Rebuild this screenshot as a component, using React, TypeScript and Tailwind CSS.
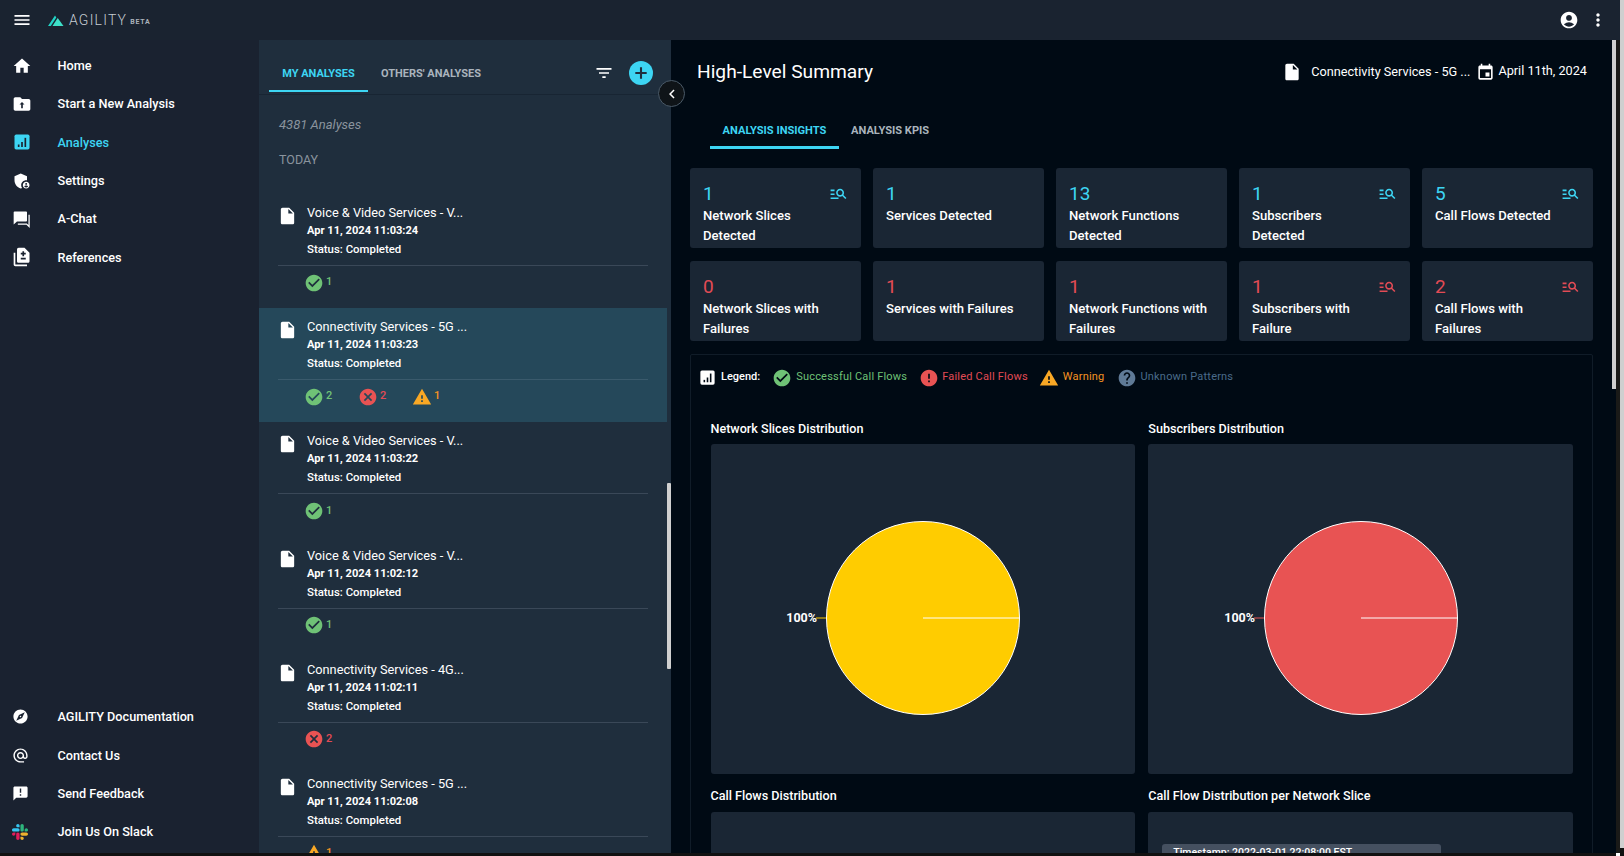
import React from 'react';
import {
  MdAccountCircle,
  MdAdminPanelSettings,
  MdAlternateEmail,
  MdAnnouncement,
  MdCancel,
  MdCheckCircle,
  MdChevronLeft,
  MdDifference,
  MdError,
  MdEvent,
  MdExplore,
  MdFilterList,
  MdHelp,
  MdHome,
  MdInsertDriveFile,
  MdManageSearch,
  MdMenu,
  MdMoreVert,
  MdWarning,
} from 'react-icons/md';

// small custom icons, the icon sets have no exact match for these
const FolderUp = ({ size = 20 }: { size?: number }) => (
  <svg viewBox="0 0 24 24" width={size} height={size}>
    <path d="M20 6h-8l-2-2H4c-1.1 0-2 .9-2 2v12c0 1.1.9 2 2 2h16c1.1 0 2-.9 2-2V8c0-1.1-.9-2-2-2z" fill="#fff" />
    <path d="M12 9.5l-3 3.2h2V17h2v-4.3h2z" fill="#1a2230" />
  </svg>
);

const BarsSquare = ({ size = 20, dark = '#1a2230' }: { size?: number; dark?: string }) => (
  <svg viewBox="0 0 24 24" width={size} height={size}>
    <rect x="3" y="3" width="18" height="18" rx="2" fill="currentColor" />
    <rect x="7" y="15" width="2" height="3" fill={dark} />
    <rect x="11" y="12" width="2" height="6" fill={dark} />
    <rect x="15" y="7" width="2" height="11" fill={dark} />
  </svg>
);

const ChatBubbles = ({ size = 20 }: { size?: number }) => (
  <svg viewBox="0 0 24 24" width={size} height={size}>
    <path d="M3 3h14c.55 0 1 .45 1 1v10c0 .55-.45 1-1 1H6l-4 3.5V4c0-.55.45-1 1-1z" fill="#fff" />
    <path d="M20.5 7v14l-3-3H7" fill="none" stroke="#fff" strokeWidth="1.5" />
  </svg>
);

const SlackLogo = () => (
  <svg viewBox="0 0 122.8 122.8" className="h-[16px] w-[16px]">
    <path d="M25.8 77.6c0 7.1-5.8 12.9-12.9 12.9S0 84.7 0 77.6s5.8-12.9 12.9-12.9h12.9v12.9zM32.3 77.6c0-7.1 5.8-12.9 12.9-12.9s12.9 5.8 12.9 12.9v32.3c0 7.1-5.8 12.9-12.9 12.9s-12.9-5.8-12.9-12.9V77.6z" fill="#e01e5a" />
    <path d="M45.2 25.8c-7.1 0-12.9-5.8-12.9-12.9S38.1 0 45.2 0s12.9 5.8 12.9 12.9v12.9H45.2zM45.2 32.3c7.1 0 12.9 5.8 12.9 12.9s-5.8 12.9-12.9 12.9H12.9C5.8 58.1 0 52.3 0 45.2s5.8-12.9 12.9-12.9h32.3z" fill="#36c5f0" />
    <path d="M97 45.2c0-7.1 5.8-12.9 12.9-12.9s12.9 5.8 12.9 12.9-5.8 12.9-12.9 12.9H97V45.2zM90.5 45.2c0 7.1-5.8 12.9-12.9 12.9s-12.9-5.8-12.9-12.9V12.9C64.7 5.8 70.5 0 77.6 0s12.9 5.8 12.9 12.9v32.3z" fill="#2eb67d" />
    <path d="M77.6 97c7.1 0 12.9 5.8 12.9 12.9s-5.8 12.9-12.9 12.9-12.9-5.8-12.9-12.9V97h12.9zM77.6 90.5c-7.1 0-12.9-5.8-12.9-12.9s5.8-12.9 12.9-12.9h32.3c7.1 0 12.9 5.8 12.9 12.9s-5.8 12.9-12.9 12.9H77.6z" fill="#ecb22e" />
  </svg>
);

const Logo = () => (
  <svg viewBox="0 0 16 11" className="h-[11px] w-[16px]">
    <path d="M0 11 L7 .6 L8.3 2.5 L2.8 11 Z" fill="#22d3c5" />
    <path d="M4.5 11 L9.7 3 L15.5 11 Z" fill="#3ee0c8" />
  </svg>
);

const navTop = [
  { label: 'Home', icon: <MdHome size={20} /> },
  { label: 'Start a New Analysis', icon: <FolderUp /> },
  { label: 'Analyses', icon: <BarsSquare />, active: true },
  { label: 'Settings', icon: <MdAdminPanelSettings size={20} /> },
  { label: 'A-Chat', icon: <ChatBubbles /> },
  { label: 'References', icon: <MdDifference size={20} /> },
];

const navBottom = [
  { label: 'AGILITY Documentation', icon: <MdExplore size={17} /> },
  { label: 'Contact Us', icon: <MdAlternateEmail size={17} /> },
  { label: 'Send Feedback', icon: <MdAnnouncement size={17} /> },
  { label: 'Join Us On Slack', icon: <SlackLogo /> },
];

const analyses = [
  { title: 'Voice & Video Services - V...', date: 'Apr 11, 2024 11:03:24', ok: 1 },
  { title: 'Connectivity Services - 5G ...', date: 'Apr 11, 2024 11:03:23', ok: 2, fail: 2, warn: 1, active: true },
  { title: 'Voice & Video Services - V...', date: 'Apr 11, 2024 11:03:22', ok: 1 },
  { title: 'Voice & Video Services - V...', date: 'Apr 11, 2024 11:02:12', ok: 1 },
  { title: 'Connectivity Services - 4G...', date: 'Apr 11, 2024 11:02:11', fail: 2 },
  { title: 'Connectivity Services - 5G ...', date: 'Apr 11, 2024 11:02:08', warn: 1 },
];

const detected = [
  { value: '1', label: 'Network Slices\nDetected', search: true },
  { value: '1', label: 'Services Detected' },
  { value: '13', label: 'Network Functions\nDetected' },
  { value: '1', label: 'Subscribers\nDetected', search: true },
  { value: '5', label: 'Call Flows Detected', search: true },
];

const failures = [
  { value: '0', label: 'Network Slices with\nFailures' },
  { value: '1', label: 'Services with Failures' },
  { value: '1', label: 'Network Functions with\nFailures' },
  { value: '1', label: 'Subscribers with\nFailure', search: true },
  { value: '2', label: 'Call Flows with\nFailures', search: true },
];

const NavItem = ({ label, icon, active }: { label: string; icon: React.ReactNode; active?: boolean }) => (
  <div className={`flex h-[38.3px] items-center pl-[12px] text-[12.7px] font-medium ${active ? 'text-[#3dd5f3]' : 'text-white'}`}>
    <span className="flex w-[45.5px] shrink-0 items-center">{icon}</span>
    <span>{label}</span>
  </div>
);

const Count = ({ kind, n }: { kind: 'ok' | 'fail' | 'warn'; n: number }) => {
  const style = {
    ok: { Icon: MdCheckCircle, icon: 'text-[#6fc276]', text: 'text-[#6fc276]', w: 'w-[54px]' },
    fail: { Icon: MdCancel, icon: 'text-[#e85353]', text: 'text-[#e24b55]', w: 'w-[54px]' },
    warn: { Icon: MdWarning, icon: 'text-[#f9a825]', text: 'text-[#f59322]', w: 'w-[40px]' },
  }[kind];
  return (
    <div className={`flex items-center gap-[2px] ${style.w}`}>
      <style.Icon size={20} className={`${style.icon} -ml-[1px]`} />
      <span className={`text-[11px] font-medium ${style.text}`}>{n}</span>
    </div>
  );
};

const AnalysisRow = ({ item }: { item: (typeof analyses)[number] }) => (
  <div className={`h-[114.2px] shrink-0 px-[19px] pt-[9px] ${item.active ? 'bg-[#25485a]' : ''}`}>
    <div className="flex h-[62px] items-start">
      <MdInsertDriveFile size={20} className="ml-[-1px] mt-[3px] w-[21px] text-white" />
      <div className="ml-[9px]">
        <div className="text-[12.75px] leading-[20px] text-white">{item.title}</div>
        <div className="text-[11.1px] font-bold leading-[16px] text-white">{item.date}</div>
        <div className="text-[11.4px] font-medium leading-[20px] text-white">Status: Completed</div>
      </div>
    </div>
    <div className={`flex h-[34px] items-center border-t pl-[27px] ${item.active ? 'border-[#3a5a6c]' : 'border-[#3a4858]'}`}>
      {item.ok ? <Count kind="ok" n={item.ok} /> : null}
      {item.fail ? <Count kind="fail" n={item.fail} /> : null}
      {item.warn ? <Count kind="warn" n={item.warn} /> : null}
    </div>
  </div>
);

const StatCard = ({ value, label, search, color }: { value: string; label: string; search?: boolean; color: string }) => (
  <div className="relative h-[80px] rounded-[3px] bg-[#1a2634] px-[13px] pt-[15px]">
    <div className={`text-[19px] leading-[22px] ${color}`}>{value}</div>
    <div className="mt-[1px] whitespace-pre-line text-[13.1px] font-medium leading-[19.5px] text-white">{label}</div>
    {search ? <MdManageSearch size={19} className={`absolute right-[13px] top-[16px] ${color}`} /> : null}
  </div>
);

const Pie = ({ color }: { color: string }) => (
  <svg viewBox="0 0 300 200" className="h-[200px] w-[300px]">
    <circle cx="150" cy="100" r="96.5" fill={color} stroke="#fff" strokeWidth="1" />
    <line x1="150" y1="100" x2="246.5" y2="100" stroke="#fff" strokeWidth="1" />
    <line x1="53" y1="100" x2="43" y2="100" stroke={color} strokeOpacity="0.5" strokeWidth="2" />
    <text x="44" y="103.5" textAnchor="end" fill="#fff" fontSize="12.5" fontWeight="700" fontFamily="Roboto, sans-serif">100%</text>
  </svg>
);

const App = () => {
  return (
    <div className="relative h-[856px] w-[1624px] overflow-hidden bg-[#111111] font-['Roboto',sans-serif]">
      <div className="flex h-[853px]">
        <div className="flex h-[853px] w-[1620px] flex-col overflow-hidden bg-[#000a14]">
          <header className="flex h-[40px] shrink-0 items-center bg-[#1a2330] pl-[12px] pr-[12px]">
            <MdMenu size={20} className="text-white" />
            <div className="ml-[16px] flex items-center">
              <Logo />
              <span className="ml-[5px] text-[14px] font-light tracking-[1.2px] text-[#c6ccd2]">AGILITY</span>
              <span className="ml-[3px] mt-[5px] text-[7px] font-bold tracking-[0.8px] text-[#aab2ba]">BETA</span>
            </div>
            <div className="ml-auto flex items-center gap-[9px]">
              <MdAccountCircle size={20} className="text-white" />
              <MdMoreVert size={20} className="text-white" />
            </div>
          </header>

          <div className="flex min-h-0 flex-1">
            <aside className="flex w-[259px] shrink-0 flex-col justify-between bg-[#1a2230] pb-[2px] pt-[6.5px]">
              <nav>
                {navTop.map((n) => (
                  <NavItem key={n.label} {...n} />
                ))}
              </nav>
              <nav>
                {navBottom.map((n) => (
                  <NavItem key={n.label} {...n} />
                ))}
              </nav>
            </aside>

            <section className="relative flex w-[412px] shrink-0 flex-col bg-[#1f2e3d]">
              <div className="flex h-[55px] shrink-0 items-start border-b border-[#182533] pl-[10px] pr-[16px]">
                <div className="flex h-[52px] w-[99px] items-center justify-center border-b-2 border-[#3dd5f3] pt-[18px] text-[11px] font-bold text-[#3dd5f3]">
                  MY ANALYSES
                </div>
                <div className="flex h-[52px] items-center border-b-2 border-transparent pl-[13px] pt-[18px] text-[11px] font-bold text-[#aab4bd]">
                  OTHERS&apos; ANALYSES
                </div>
                <div className="ml-auto flex h-[52px] items-center gap-[15px] border-b-2 border-transparent pr-[2px] pt-[16px]">
                  <MdFilterList size={20} className="text-white" />
                  <span className="flex h-[24px] w-[24px] items-center justify-center rounded-full bg-[#3dd5f3]">
                    <svg viewBox="0 0 16 16" className="h-[14px] w-[14px]">
                      <path d="M8 1.5v13M1.5 8h13" stroke="#1f2e3d" strokeWidth="2.4" />
                    </svg>
                  </span>
                </div>
              </div>
              <div className="pl-[20px] pt-[22px] text-[13px] italic leading-[16px] text-[#8a949e]">4381 Analyses</div>
              <div className="pl-[20px] pt-[19px] text-[12.5px] leading-[16px] text-[#8a949e]">TODAY</div>
              <div className="mt-[26px] flex w-[408px] flex-col">
                {analyses.map((a) => (
                  <AnalysisRow key={a.date} item={a} />
                ))}
              </div>
              <div className="absolute right-0 top-[443px] h-[186px] w-[4px] rounded-[1px] bg-[#d0d0d0]" />
              <button className="absolute right-[-14px] top-[40px] flex h-[27px] w-[27px] items-center justify-center rounded-full border border-[#4a5a68] bg-[#0f1418] text-white">
                <MdChevronLeft size={18} />
              </button>
            </section>

            <main className="relative min-w-0 flex-1">
              <div className="flex items-center justify-between pl-[26px] pr-[33px] pt-[20px]">
                <h1 className="text-[19.2px] leading-[24px] text-white">High-Level Summary</h1>
                <div className="flex items-center text-[12.7px] text-white">
                  <MdInsertDriveFile size={20} className="mr-[9px]" />
                  <span>Connectivity Services - 5G ...</span>
                  <MdEvent size={19} className="ml-[6px] mr-[3px]" />
                  <span className="mt-[-3px]">April 11th, 2024</span>
                </div>
              </div>

              <div className="ml-[39px] mt-[24px] flex h-[41px] items-start text-[11.1px] font-bold leading-[16px]">
                <div className="h-[41px] w-[129px] border-b-[3px] border-[#3dd5f3] pt-[15px] text-center text-[#3dd5f3]">
                  ANALYSIS INSIGHTS
                </div>
                <div className="pl-[12px] pt-[15px] text-[#aab4bd]">ANALYSIS KPIS</div>
              </div>

              <div className="ml-[19px] mr-[27px] mt-[19px] grid grid-cols-5 gap-x-[12px] gap-y-[13px]">
                {detected.map((c) => (
                  <StatCard key={c.label} {...c} color="text-[#3dd5f3]" />
                ))}
                {failures.map((c) => (
                  <StatCard key={c.label} {...c} color="text-[#e24b55]" />
                ))}
              </div>

              <div className="ml-[19px] mr-[27px] mt-[13px] h-[520px] rounded-[2px] border border-[#101c28] pl-[19.5px] pr-[19px]">
                <div className="ml-[-12.5px] flex h-[45px] items-center text-[11px] tracking-[0.2px]">
                  <span className="text-white"><BarsSquare size={19} dark="#000a14" /></span>
                  <span className="ml-[4px] font-medium tracking-normal text-white">Legend:</span>
                  <MdCheckCircle size={20} className="ml-[12px] text-[#6fc276]" />
                  <span className="ml-[4px] text-[#6fc276]">Successful Call Flows</span>
                  <MdError size={20} className="ml-[12px] text-[#e85353]" />
                  <span className="ml-[3px] text-[#e24b55]">Failed Call Flows</span>
                  <MdWarning size={20} className="ml-[11px] text-[#f9a825]" />
                  <span className="ml-[4px] text-[#f59322]">Warning</span>
                  <MdHelp size={20} className="ml-[13px] text-[#5f7a96]" />
                  <span className="ml-[3px] text-[#4a6a8a]">Unknown Patterns</span>
                </div>
                <div className="mt-[20px] grid grid-cols-2 gap-x-[13px]">
                  <div>
                    <div className="text-[12.6px] font-medium leading-[18px] text-white">Network Slices Distribution</div>
                    <div className="mt-[6px] flex h-[330px] items-center justify-center rounded-[3px] bg-[#1a2634] pt-[18px]">
                      <Pie color="#ffcc00" />
                    </div>
                  </div>
                  <div>
                    <div className="text-[12.6px] font-medium leading-[18px] text-white">Subscribers Distribution</div>
                    <div className="mt-[6px] flex h-[330px] items-center justify-center rounded-[3px] bg-[#1a2634] pt-[18px]">
                      <Pie color="#e85353" />
                    </div>
                  </div>
                  <div className="mt-[13px]">
                    <div className="text-[12.6px] font-medium leading-[18px] text-white">Call Flows Distribution</div>
                    <div className="mt-[7px] h-[200px] rounded-[3px] bg-[#1a2634]" />
                  </div>
                  <div className="mt-[13px]">
                    <div className="text-[12.6px] font-medium leading-[18px] text-white">Call Flow Distribution per Network Slice</div>
                    <div className="mt-[7px] h-[200px] rounded-[3px] bg-[#1a2634] pl-[14px] pt-[32px]">
                      <div className="w-[279px] rounded-t-[3px] bg-[#455060] pl-[11px] pt-[1px] text-[10.5px] font-medium leading-[16px] text-white">
                        Timestamp: 2022-03-01 22:08:00 EST
                      </div>
                    </div>
                  </div>
                </div>
              </div>

              {/* inner scrollbar */}
              <div className="absolute right-0 top-0 h-full w-[4px] bg-[#1a1a18]" />
              <div className="absolute right-[4px] top-0 h-[349px] w-[4px] bg-[#cfcfcf]" />
            </main>
          </div>
        </div>
        <div className="h-[848px] w-[4px] bg-[#cfcfcf]" />
      </div>
      <div className="absolute left-[1616px] top-[853px] h-[3px] w-[4px] bg-white" />
    </div>
  );
};

export default App;
